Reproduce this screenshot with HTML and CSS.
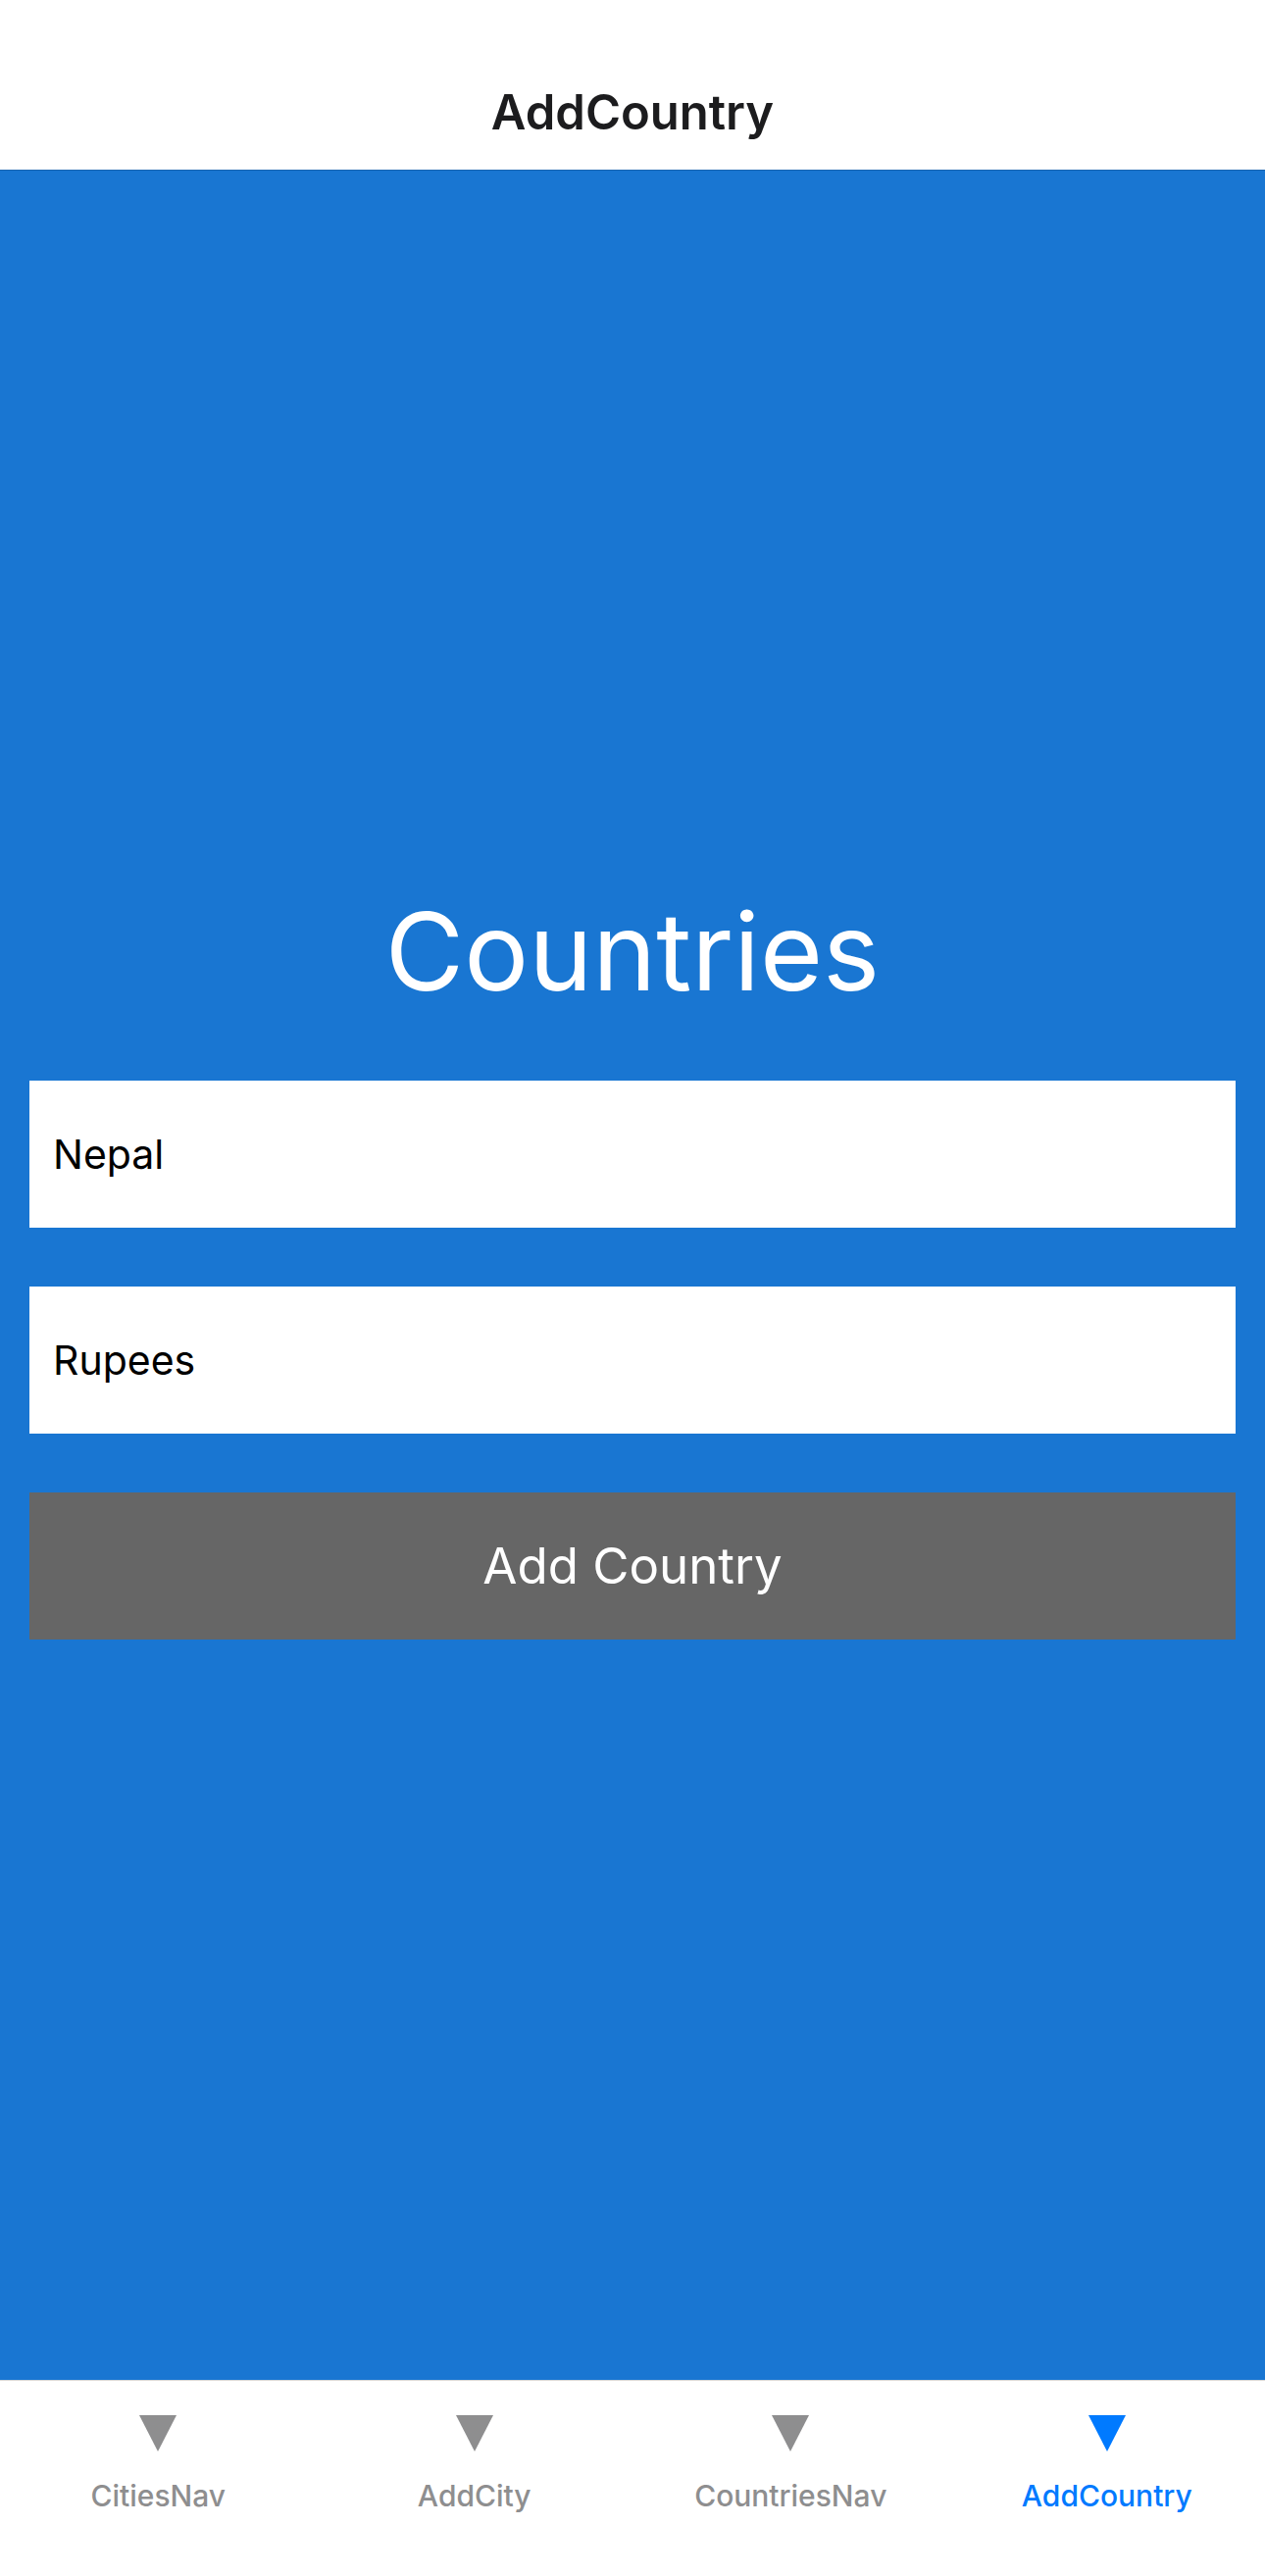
FILE: index.html
```html
<!DOCTYPE html>
<html lang="en">
<head>
<meta charset="utf-8">
<meta name="viewport" content="width=device-width, initial-scale=1">
<title>AddCountry</title>
<link rel="stylesheet" href="styles.css">
</head>
<body>
<header class="header"><h1 class="header-title">AddCountry</h1></header>
<main class="content">
  <form class="form">
    <h2 class="heading">Countries</h2>
    <input class="field" type="text" aria-label="Country name" value="Nepal">
    <input class="field" type="text" aria-label="Currency" value="Rupees">
    <button class="submit" type="button">Add Country</button>
  </form>
</main>
<nav class="tabs">
  <a class="tab" href="#cities"><svg class="tab-icon" viewBox="0 0 38 37" aria-hidden="true"><path d="M0 0H38L19 37Z"/></svg><span>CitiesNav</span></a>
  <a class="tab" href="#add-city"><svg class="tab-icon" viewBox="0 0 38 37" aria-hidden="true"><path d="M0 0H38L19 37Z"/></svg><span>AddCity</span></a>
  <a class="tab" href="#countries"><svg class="tab-icon" viewBox="0 0 38 37" aria-hidden="true"><path d="M0 0H38L19 37Z"/></svg><span>CountriesNav</span></a>
  <a class="tab tab-active" href="#add-country" aria-current="page"><svg class="tab-icon" viewBox="0 0 38 37" aria-hidden="true"><path d="M0 0H38L19 37Z"/></svg><span>AddCountry</span></a>
</nav>
</body>
</html>
```
FILE: styles.css
```css
* { box-sizing: border-box; }
body {
  margin: 0;
  min-height: 100vh;
  display: flex;
  flex-direction: column;
  background: #fff;
  font-family: Inter, "Liberation Sans", sans-serif;
}
.header {
  padding: 83px 24px 26px;
  text-align: center;
}
.header-title {
  margin: 0;
  font-size: 49px;
  line-height: 64px;
  font-weight: 600;
  color: #1c1c1e;
}
.content {
  flex: 1;
  display: flex;
  flex-direction: column;
  justify-content: center;
  border-top: 1px solid #1764b0;
  background: #1976d2;
}
.form {
  display: flex;
  flex-direction: column;
  padding: 0 30px 32px;
}
.heading {
  margin: 0 0 60px;
  font-size: 110px;
  line-height: 144px;
  font-weight: 400;
  color: #fff;
  text-align: center;
}
.field, .submit {
  width: 100%;
  height: 150px;
  margin: 0 0 60px;
  padding: 0 24px;
  border: 0;
  border-radius: 0;
  font-family: inherit;
}
.field {
  background: #fff;
  color: #000;
  font-size: 41px;
}
.submit {
  margin: 0;
  background: #666;
  color: #fff;
  font-size: 51px;
}
.tabs {
  display: flex;
  padding: 35px 0 63px;
  border-top: 1px solid #d8d8d8;
}
.tab {
  flex: 1;
  display: flex;
  flex-direction: column;
  align-items: center;
  gap: 26px;
  color: #8e8e8f;
  font-size: 30px;
  line-height: 38px;
  font-weight: 500;
  text-decoration: none;
}
.tab-active { color: #007aff; }
.tab-icon {
  width: 38px;
  height: 37px;
  fill: currentColor;
}
```
